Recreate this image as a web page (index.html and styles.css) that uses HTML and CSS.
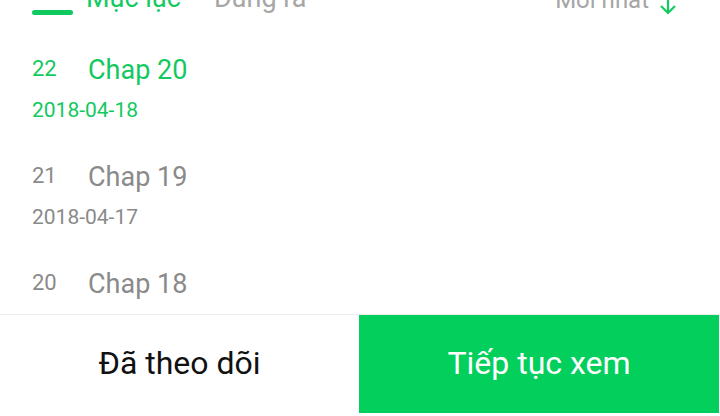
FILE: index.html
```html
<!DOCTYPE html>
<html>
<head>
<meta charset="utf-8">
<title>Mục lục</title>
<link rel="stylesheet" href="styles.css">
</head>
<body>
	<div class="tabs">
		<span class="tab-bar"></span>
		<span class="tab active">Mục lục</span>
		<span class="tab">Dung ra</span>
		<span class="sort">Mới nhất
			<svg class="sort-icon" width="18" height="16" viewBox="0 0 18 16">
				<path d="M9 -4 V13 M2 6 L9 13 L16 6" fill="none" stroke="#12cb5f" stroke-width="2.2"/>
			</svg>
		</span>
	</div>

	<div class="chapters">
		<div class="chapter current">
			<div class="chapter-head">
				<span class="chapter-no">22</span>
				<span class="chapter-name">Chap 20</span>
			</div>
			<div class="chapter-date">2018-04-18</div>
		</div>
		<div class="chapter">
			<div class="chapter-head">
				<span class="chapter-no">21</span>
				<span class="chapter-name">Chap 19</span>
			</div>
			<div class="chapter-date">2018-04-17</div>
		</div>
		<div class="chapter">
			<div class="chapter-head">
				<span class="chapter-no">20</span>
				<span class="chapter-name">Chap 18</span>
			</div>
			<div class="chapter-date">2018-04-16</div>
		</div>
	</div>

	<div class="footer">
		<div class="btn btn-follow">Đã theo dõi</div>
		<div class="btn btn-read">Tiếp tục xem</div>
	</div>
</body>
</html>
```

FILE: styles.css
```css
* {
	box-sizing: border-box;
}
body {
	margin: 0;
	width: 720px;
	height: 416px;
	overflow: hidden;
	background: #fff;
	font-family: Roboto, "Noto Sans", sans-serif;
}
.tabs {
	display: flex;
	align-items: flex-start;
	height: 27px;
	margin-top: -15px;
	padding-left: 32px;
	padding-right: 43px;
}
.tab-bar {
	width: 41px;
	height: 5px;
	margin-top: 25px;
	margin-right: 13px;
	border-radius: 3px;
	background-color: #0fcb5f;
}
.tab {
	font-size: 27px;
	line-height: 27px;
	color: #a6a6a6;
	margin-right: 33px;
}
.tab.active {
	color: #12cb5f;
}
.sort {
	margin-left: auto;
	font-size: 24px;
	line-height: 24px;
	margin-top: 3px;
	color: #a6a6a6;
	display: flex;
	align-items: flex-start;
}
.sort-icon {
	margin-left: 10px;
	margin-top: 12px;
}
.chapters {
	padding-top: 45px;
}
.chapter {
	height: 107px;
	padding-left: 32px;
	color: #8a8a8a;
}
.chapter.current {
	color: #12c95f;
}
.chapter-head {
	display: flex;
	align-items: flex-start;
}
.chapter-no {
	width: 56px;
	font-size: 22px;
	line-height: 22px;
	margin-top: 1px;
}
.chapter-name {
	font-size: 27px;
	line-height: 27px;
}
.chapter-date {
	font-size: 21px;
	line-height: 21px;
	margin-top: 16px;
}
.footer {
	position: fixed;
	left: 0;
	bottom: 0;
	width: 720px;
	height: 102px;
	display: flex;
	padding-bottom: 3px;
	padding-right: 1px;
	border-top: 1px solid #ececec;
	background: #fff;
}
.btn {
	display: flex;
	align-items: center;
	justify-content: center;
	font-size: 32px;
	padding-bottom: 2px;
}
.btn-follow {
	width: 359px;
	color: #111;
}
.btn-read {
	flex: 1;
	background-color: #03cf5d;
	color: #fff;
}
```
